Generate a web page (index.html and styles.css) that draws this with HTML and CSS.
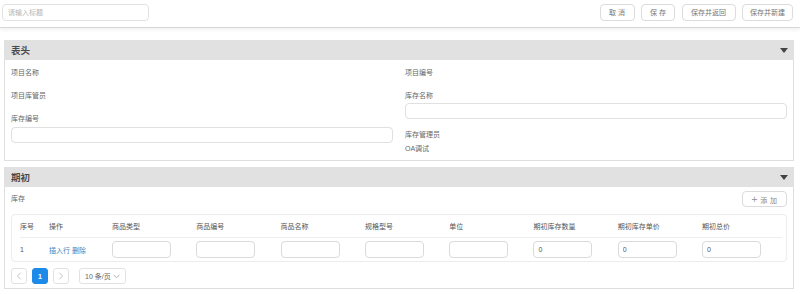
FILE: index.html
```html
<!DOCTYPE html>
<html lang="zh-CN">
<head>
<meta charset="utf-8">
<link rel="stylesheet" href="styles.css">
</head>
<body>
<div class="topbar">
  <input class="title-input" type="text" placeholder="请输入标题">
  <div class="actions">
    <button class="btn w35">取 消</button>
    <button class="btn w34">保 存</button>
    <button class="btn w54">保存并返回</button>
    <button class="btn w51">保存并新建</button>
  </div>
</div>
<main class="main">
  <section class="panel">
    <header class="panel-head"><span class="panel-title">表头</span><span class="caret"></span></header>
    <div class="panel-body form-grid">
      <div class="col">
        <div class="field"><div class="label">项目名称</div></div>
        <div class="field"><div class="label">项目库管员</div></div>
        <div class="field"><div class="label">库存编号</div><input class="text-input tall" type="text"></div>
      </div>
      <div class="col">
        <div class="field"><div class="label">项目编号</div></div>
        <div class="field"><div class="label">库存名称</div><input class="text-input" type="text"></div>
        <div class="field"><div class="label">库存管理员</div><div class="value">OA调试</div></div>
      </div>
    </div>
  </section>
  <section class="panel panel2">
    <header class="panel-head"><span class="panel-title">期初</span><span class="caret"></span></header>
    <div class="panel-body body2">
      <div class="toolbar">
        <span class="label">库存</span>
        <button class="add-btn"><span class="plus">+</span> 添 加</button>
      </div>
      <div class="table">
        <div class="row head-row">
          <div>序号</div><div>操作</div><div>商品类型</div><div>商品编号</div><div>商品名称</div><div>规格型号</div><div>单位</div><div>期初库存数量</div><div>期初库存单价</div><div>期初总价</div>
        </div>
        <div class="row data-row">
          <div>1</div>
          <div><a class="link">插入行</a> <a class="link">删除</a></div>
          <div><input class="cell-input" type="text"></div>
          <div><input class="cell-input" type="text"></div>
          <div><input class="cell-input" type="text"></div>
          <div><input class="cell-input" type="text"></div>
          <div><input class="cell-input" type="text"></div>
          <div><input class="cell-input" type="text" value="0"></div>
          <div><input class="cell-input" type="text" value="0"></div>
          <div><input class="cell-input" type="text" value="0"></div>
        </div>
      </div>
      <div class="pager">
        <span class="pg-btn"><svg width="6" height="8" viewBox="0 0 6 8"><path d="M4.5 0.8 L1.5 4 L4.5 7.2" fill="none" stroke="#bbb" stroke-width="0.9"/></svg></span>
        <span class="pg-btn active">1</span>
        <span class="pg-btn"><svg width="6" height="8" viewBox="0 0 6 8"><path d="M1.5 0.8 L4.5 4 L1.5 7.2" fill="none" stroke="#bbb" stroke-width="0.9"/></svg></span>
        <span class="pg-size">10 条/页 <svg width="7" height="5" viewBox="0 0 7 5"><path d="M0.6 0.8 L3.5 3.8 L6.4 0.8" fill="none" stroke="#aaa" stroke-width="0.9"/></svg></span>
      </div>
    </div>
  </section>
</main>
</body>
</html>
```

FILE: styles.css
```css
* { box-sizing: border-box; }
html, body { margin: 0; padding: 0; background: #fff; }
body {
  width: 800px;
  height: 294px;
  overflow: hidden;
  font-family: "Liberation Sans", "Noto Sans CJK SC", sans-serif;
  font-size: 7px;
  color: #666;
}
input, button { font-family: inherit; font-size: 7px; margin: 0; }

.topbar {
  height: 28px;
  display: flex;
  justify-content: space-between;
  align-items: flex-start;
  padding: 4px 7px 0 2px;
  border-bottom: 1px solid #d8d8d8;
  box-shadow: 0 2px 4px rgba(0,0,0,0.06);
}
.title-input {
  width: 147px;
  height: 17px;
  border: 1px solid #e2e2e2;
  border-radius: 4px;
  padding: 0 5px;
  color: #999;
  outline: none;
}
.title-input::placeholder { color: #b5b5b5; }
.actions { display: flex; gap: 6.5px; }
.btn {
  height: 17px;
  padding: 0;
  background: #fff;
  border: 1px solid #dcdcdc;
  border-radius: 4px;
  color: #777;
  line-height: 15px;
  text-align: center;
}
.w35 { width: 35px; }
.w34 { width: 34px; }
.w54 { width: 54px; }
.w51 { width: 51px; }

.main { padding: 12px 6px 0 4px; display: flex; flex-direction: column; gap: 6px; }
.panel { border: 1px solid #dedede; }
.panel-head {
  height: 20px;
  margin: -1px -1px 0;
  background: #e1e1e1;
  display: flex;
  align-items: center;
  justify-content: space-between;
  padding: 0 6px 0 7px;
}
.panel-title {
  font-family: "Noto Sans CJK SC", sans-serif;
  font-size: 9.5px;
  font-weight: 700;
  color: #4a4a4a;
}
.caret {
  width: 0; height: 0;
  border-left: 4px solid transparent;
  border-right: 4px solid transparent;
  border-top: 5px solid #444;
}

.panel-body { padding: 6px 6px 3px 6px; }
.form-grid { display: grid; grid-template-columns: 1fr 1fr; column-gap: 12px; height: 100px; }
.field { margin-bottom: 9px; }
.label, .value { line-height: 14px; height: 14px; color: #666; white-space: nowrap; }
.text-input {
  display: block;
  width: 100%;
  height: 16px;
  border: 1px solid #e0e0e0;
  border-radius: 4px;
  outline: none;
}
.text-input.tall { margin-top: 1px; }

.body2 { padding: 4px 6px 4px 6px; }
.toolbar { display: flex; justify-content: space-between; align-items: center; height: 16px; }
.add-btn {
  height: 16px;
  width: 45px;
  padding: 0;
  background: #fff;
  border: 1px solid #dcdcdc;
  border-radius: 4px;
  color: #888;
  letter-spacing: 0.5px;
}
.plus { font-size: 10px; font-weight: 300; color: #999; }

.table {
  margin-top: 7px;
  border: 1px solid #ececec;
  border-radius: 4px;
  padding: 0 4px 0 8px;
}
.row {
  display: grid;
  grid-template-columns: 29px 63px repeat(7, 84.3px) 1fr;
  align-items: center;
  color: #555;
}
.head-row { height: 23px; border-bottom: 1px solid #eee; }
.data-row { height: 23px; }
.link { color: #3a7fc0; text-decoration: none; }
.cell-input {
  display: block;
  width: 59px;
  height: 17px;
  border: 1px solid #dadada;
  border-radius: 4px;
  padding: 0 4px;
  color: #555;
  outline: none;
}

.pager { margin-top: 6px; display: flex; align-items: center; gap: 5px; }
.pg-btn {
  width: 16px; height: 16px;
  border: 1px solid #e2e2e2;
  border-radius: 3px;
  display: flex; align-items: center; justify-content: center;
  color: #fff;
  font-weight: 700;
}
.pg-btn.active { background: #1b8ae8; border-color: #1b8ae8; }
.pg-size {
  margin-left: 5px;
  width: 47px; height: 16px;
  border: 1px solid #e2e2e2;
  border-radius: 3px;
  display: flex; align-items: center; justify-content: space-between;
  padding: 0 5px 0 5px;
  color: #666;
}
```
